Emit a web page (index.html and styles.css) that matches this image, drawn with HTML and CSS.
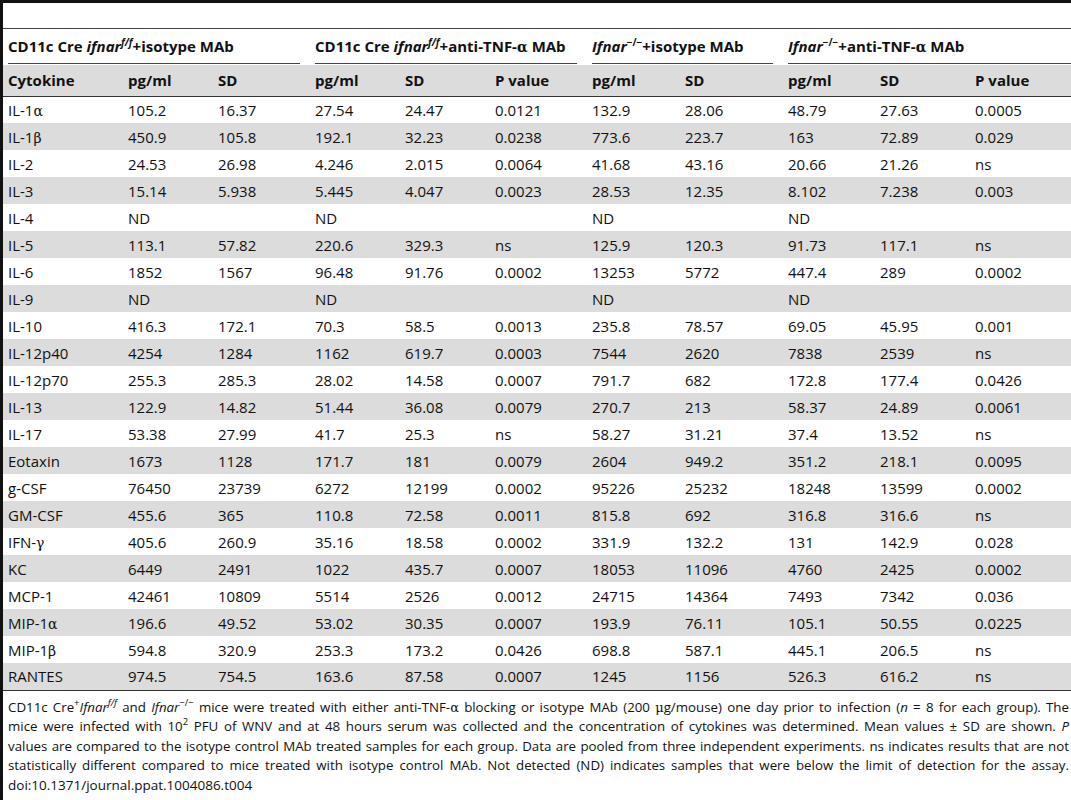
FILE: index.html
```html
<!DOCTYPE html>
<html lang="en">
<head>
    <meta charset="UTF-8">
    <title>Table 4 - Cytokines</title>
    <link rel="stylesheet" href="styles.css">
</head>
<body>
<div class="page">
    <div class="spacer"></div>
    <table class="cyto">
        <colgroup>
            <col class="c1"><col class="c2"><col class="c3"><col class="c4"><col class="c5"><col class="c6">
            <col class="c7"><col class="c8"><col class="c9"><col class="c10"><col class="c11">
        </colgroup>
        <thead>
            <tr class="groups">
                <th colspan="3"><div class="grp">CD11c Cre <i>ifnar</i><sup><i>f/f</i></sup>+isotype MAb</div></th>
                <th colspan="3"><div class="grp">CD11c Cre <i>ifnar</i><sup><i>f/f</i></sup>+anti-TNF-<span class="gk">α</span> MAb</div></th>
                <th colspan="2"><div class="grp"><i>Ifnar</i><sup>−/−</sup>+isotype MAb</div></th>
                <th colspan="3" class="last"><div class="grp"><i>Ifnar</i><sup>−/−</sup>+anti-TNF-<span class="gk">α</span> MAb</div></th>
            </tr>
            <tr class="cols">
                <th>Cytokine</th><th>pg/ml</th><th>SD</th>
                <th>pg/ml</th><th>SD</th><th>P value</th>
                <th>pg/ml</th><th>SD</th>
                <th>pg/ml</th><th>SD</th><th>P value</th>
            </tr>
        </thead>
        <tbody>
            <tr><td>IL-1<span class="gk">α</span></td><td>105.2</td><td>16.37</td><td>27.54</td><td>24.47</td><td>0.0121</td><td>132.9</td><td>28.06</td><td>48.79</td><td>27.63</td><td>0.0005</td></tr>
            <tr><td>IL-1<span class="gk">β</span></td><td>450.9</td><td>105.8</td><td>192.1</td><td>32.23</td><td>0.0238</td><td>773.6</td><td>223.7</td><td>163</td><td>72.89</td><td>0.029</td></tr>
            <tr><td>IL-2</td><td>24.53</td><td>26.98</td><td>4.246</td><td>2.015</td><td>0.0064</td><td>41.68</td><td>43.16</td><td>20.66</td><td>21.26</td><td>ns</td></tr>
            <tr><td>IL-3</td><td>15.14</td><td>5.938</td><td>5.445</td><td>4.047</td><td>0.0023</td><td>28.53</td><td>12.35</td><td>8.102</td><td>7.238</td><td>0.003</td></tr>
            <tr><td>IL-4</td><td>ND</td><td></td><td>ND</td><td></td><td></td><td>ND</td><td></td><td>ND</td><td></td><td></td></tr>
            <tr><td>IL-5</td><td>113.1</td><td>57.82</td><td>220.6</td><td>329.3</td><td>ns</td><td>125.9</td><td>120.3</td><td>91.73</td><td>117.1</td><td>ns</td></tr>
            <tr><td>IL-6</td><td>1852</td><td>1567</td><td>96.48</td><td>91.76</td><td>0.0002</td><td>13253</td><td>5772</td><td>447.4</td><td>289</td><td>0.0002</td></tr>
            <tr><td>IL-9</td><td>ND</td><td></td><td>ND</td><td></td><td></td><td>ND</td><td></td><td>ND</td><td></td><td></td></tr>
            <tr><td>IL-10</td><td>416.3</td><td>172.1</td><td>70.3</td><td>58.5</td><td>0.0013</td><td>235.8</td><td>78.57</td><td>69.05</td><td>45.95</td><td>0.001</td></tr>
            <tr><td>IL-12p40</td><td>4254</td><td>1284</td><td>1162</td><td>619.7</td><td>0.0003</td><td>7544</td><td>2620</td><td>7838</td><td>2539</td><td>ns</td></tr>
            <tr><td>IL-12p70</td><td>255.3</td><td>285.3</td><td>28.02</td><td>14.58</td><td>0.0007</td><td>791.7</td><td>682</td><td>172.8</td><td>177.4</td><td>0.0426</td></tr>
            <tr><td>IL-13</td><td>122.9</td><td>14.82</td><td>51.44</td><td>36.08</td><td>0.0079</td><td>270.7</td><td>213</td><td>58.37</td><td>24.89</td><td>0.0061</td></tr>
            <tr><td>IL-17</td><td>53.38</td><td>27.99</td><td>41.7</td><td>25.3</td><td>ns</td><td>58.27</td><td>31.21</td><td>37.4</td><td>13.52</td><td>ns</td></tr>
            <tr><td>Eotaxin</td><td>1673</td><td>1128</td><td>171.7</td><td>181</td><td>0.0079</td><td>2604</td><td>949.2</td><td>351.2</td><td>218.1</td><td>0.0095</td></tr>
            <tr><td>g-CSF</td><td>76450</td><td>23739</td><td>6272</td><td>12199</td><td>0.0002</td><td>95226</td><td>25232</td><td>18248</td><td>13599</td><td>0.0002</td></tr>
            <tr><td>GM-CSF</td><td>455.6</td><td>365</td><td>110.8</td><td>72.58</td><td>0.0011</td><td>815.8</td><td>692</td><td>316.8</td><td>316.6</td><td>ns</td></tr>
            <tr><td>IFN-<span class="gk">γ</span></td><td>405.6</td><td>260.9</td><td>35.16</td><td>18.58</td><td>0.0002</td><td>331.9</td><td>132.2</td><td>131</td><td>142.9</td><td>0.028</td></tr>
            <tr><td>KC</td><td>6449</td><td>2491</td><td>1022</td><td>435.7</td><td>0.0007</td><td>18053</td><td>11096</td><td>4760</td><td>2425</td><td>0.0002</td></tr>
            <tr><td>MCP-1</td><td>42461</td><td>10809</td><td>5514</td><td>2526</td><td>0.0012</td><td>24715</td><td>14364</td><td>7493</td><td>7342</td><td>0.036</td></tr>
            <tr><td>MIP-1<span class="gk">α</span></td><td>196.6</td><td>49.52</td><td>53.02</td><td>30.35</td><td>0.0007</td><td>193.9</td><td>76.11</td><td>105.1</td><td>50.55</td><td>0.0225</td></tr>
            <tr><td>MIP-1<span class="gk">β</span></td><td>594.8</td><td>320.9</td><td>253.3</td><td>173.2</td><td>0.0426</td><td>698.8</td><td>587.1</td><td>445.1</td><td>206.5</td><td>ns</td></tr>
            <tr><td>RANTES</td><td>974.5</td><td>754.5</td><td>163.6</td><td>87.58</td><td>0.0007</td><td>1245</td><td>1156</td><td>526.3</td><td>616.2</td><td>ns</td></tr>
        </tbody>
    </table>
    <p class="caption">CD11c Cre<sup>+</sup><i>Ifnar</i><sup><i>f/f</i></sup> and <i>Ifnar</i><sup>−/−</sup> mice were treated with either anti-TNF-<span class="gk">α</span> blocking or isotype MAb (200 <span class="gk">μ</span>g/mouse) one day prior to infection (<i>n</i> = 8 for each group). The<br>mice were infected with 10<sup>2</sup> PFU of WNV and at 48 hours serum was collected and the concentration of cytokines was determined. Mean values ± SD are shown. <i>P</i><br>values are compared to the isotype control MAb treated samples for each group. Data are pooled from three independent experiments. ns indicates results that are not<br>statistically different compared to mice treated with isotype control MAb. Not detected (ND) indicates samples that were below the limit of detection for the assay.</p>
    <p class="doi">doi:10.1371/journal.ppat.1004086.t004</p>
</div>
</body>
</html>
```
FILE: styles.css
```css
*{
    margin:0;
    padding:0;
    box-sizing:border-box;
}
body{
    background:#fff;
    color:#111;
    font-family:"Open Sans","Noto Sans",sans-serif;
}
.page{
    width:1071px;
    height:800px;
    overflow:hidden;
    border-left:3px solid #111;
    border-top:3px solid #111;
}
.spacer{
    height:25px;
}
.gk{
    font-family:"DejaVu Serif","Liberation Serif",serif;
    font-size:14px;
}
sup{
    font-size:10px;
    line-height:0;
    vertical-align:6px;
}

/* table */
.cyto{
    width:1068px;
    table-layout:fixed;
    border-collapse:collapse;
    border-top:1px solid #444;
    border-bottom:1px solid #333;
    font-size:15px;
}
.c1{width:120px;}
.c2{width:90px;}
.c3{width:97px;}
.c4{width:90px;}
.c5{width:90px;}
.c6{width:97px;}
.c7{width:93px;}
.c8{width:103px;}
.c9{width:92px;}
.c10{width:95px;}
.c11{width:101px;}

.cyto th, .cyto td{
    text-align:left;
    white-space:nowrap;
    padding-left:5px;
}
.groups th{
    padding:0 10px 1px 5px;
    font-weight:700;
}
.groups th.last{
    padding-right:0;
}
.grp{
    height:35px;
    line-height:34px;
    border-bottom:1px solid #444;
}
.cols th{
    height:31px;
    background:#dcdcdc;
    font-weight:700;
    border-bottom:1px solid #333;
}
.cyto td{
    height:27px;
    font-weight:400;
}
.cyto tbody tr:nth-child(even) td{
    background:#dcdcdc;
}

/* caption */
.caption{
    margin-top:7px;
    padding:0 2px 0 5px;
    font-size:13.3px;
    line-height:19.5px;
    text-align:justify;
    text-align-last:justify;
}
.caption .gk{
    font-size:13px;
}
.caption sup{
    font-size:9.5px;
}
.doi{
    padding-left:5px;
    font-size:13.5px;
    line-height:19.5px;
}
```
